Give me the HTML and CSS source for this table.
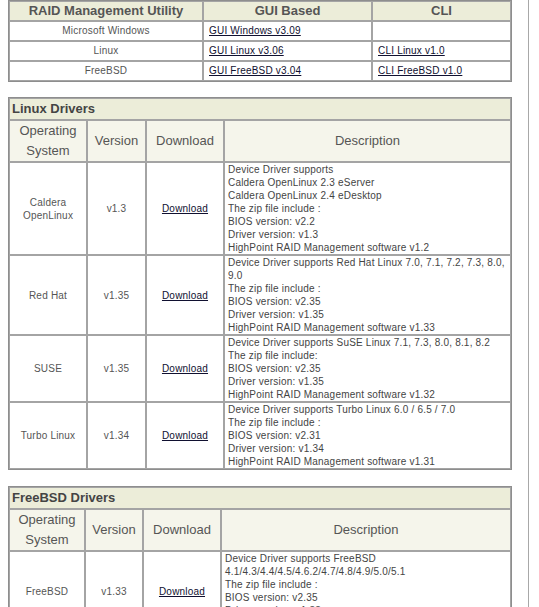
FILE: index.html
```html
<!DOCTYPE html>
<html>
<head>
<meta charset="utf-8">
<title>HighPoint RAID Drivers</title>
<link rel="stylesheet" href="styles.css">
</head>
<body>
<div class="page">
  <table class="grid util">
    <colgroup><col class="u1"><col class="u2"><col></colgroup>
    <tr class="head"><th>RAID Management Utility</th><th>GUI Based</th><th>CLI</th></tr>
    <tr><td class="os">Microsoft Windows</td><td class="lnk"><a href="#">GUI Windows v3.09</a></td><td class="lnk"></td></tr>
    <tr><td class="os">Linux</td><td class="lnk"><a href="#">GUI Linux v3.06</a></td><td class="lnk"><a href="#">CLI Linux v1.0</a></td></tr>
    <tr><td class="os">FreeBSD</td><td class="lnk"><a href="#">GUI FreeBSD v3.04</a></td><td class="lnk"><a href="#">CLI FreeBSD v1.0</a></td></tr>
  </table>

  <table class="grid drivers linux">
    <colgroup><col class="c1"><col class="c2"><col class="c3"><col></colgroup>
    <tr class="title"><th colspan="4">Linux Drivers</th></tr>
    <tr class="colhead"><th>Operating<br>System</th><th>Version</th><th>Download</th><th>Description</th></tr>
    <tr>
      <td class="mid">Caldera<br>OpenLinux</td><td class="mid">v1.3</td><td class="mid"><a href="#">Download</a></td>
      <td class="desc">Device Driver supports<br>Caldera OpenLinux 2.3 eServer<br>Caldera OpenLinux 2.4 eDesktop<br>The zip file include :<br>BIOS version: v2.2<br>Driver version: v1.3<br>HighPoint RAID Management software v1.2</td>
    </tr>
    <tr>
      <td class="mid">Red Hat</td><td class="mid">v1.35</td><td class="mid"><a href="#">Download</a></td>
      <td class="desc">Device Driver supports Red Hat Linux 7.0, 7.1, 7.2, 7.3, 8.0, 9.0<br>The zip file include :<br>BIOS version: v2.35<br>Driver version: v1.35<br>HighPoint RAID Management software v1.33</td>
    </tr>
    <tr>
      <td class="mid">SUSE</td><td class="mid">v1.35</td><td class="mid"><a href="#">Download</a></td>
      <td class="desc">Device Driver supports SuSE Linux 7.1, 7.3, 8.0, 8.1, 8.2<br>The zip file include:<br>BIOS version: v2.35<br>Driver version: v1.35<br>HighPoint RAID Management software v1.32</td>
    </tr>
    <tr>
      <td class="mid">Turbo Linux</td><td class="mid">v1.34</td><td class="mid"><a href="#">Download</a></td>
      <td class="desc">Device Driver supports Turbo Linux 6.0 / 6.5 / 7.0<br>The zip file include :<br>BIOS version: v2.31<br>Driver version: v1.34<br>HighPoint RAID Management software v1.31</td>
    </tr>
  </table>

  <table class="grid drivers bsd">
    <colgroup><col class="b1"><col class="b2"><col class="b3"><col></colgroup>
    <tr class="title"><th colspan="4">FreeBSD Drivers</th></tr>
    <tr class="colhead"><th>Operating<br>System</th><th>Version</th><th>Download</th><th>Description</th></tr>
    <tr>
      <td class="mid">FreeBSD</td><td class="mid">v1.33</td><td class="mid"><a href="#">Download</a></td>
      <td class="desc">Device Driver supports FreeBSD<br>4.1/4.3/4.4/4.5/4.6.2/4.7/4.8/4.9/5.0/5.1<br>The zip file include :<br>BIOS version: v2.35<br>Driver version: v1.33<br>HighPoint RAID Management software v1.33</td>
    </tr>
  </table>
</div>
</body>
</html>
```

FILE: styles.css
```css
html, body {
  margin: 0;
  padding: 0;
  background: #ffffff;
}

.page {
  width: 520px;
  padding: 0 0 20px 8px;
  border-right: 1px solid #a8a8a8;
  min-height: 640px;
  font-family: "Liberation Sans", Arial, sans-serif;
  color: #444;
}

.grid {
  width: 504px;
  border-collapse: separate;
  border-spacing: 0;
  border: 1px solid #8e8e8e;
  table-layout: fixed;
}

.grid th,
.grid td {
  border: 1px solid #a4a4a4;
  padding: 0 3px;
}

/* utility table */
.util .u1 { width: 194px; }
.util .u2 { width: 169px; }

.util .head th {
  background: #ecedd9;
  height: 18px;
  font-size: 13px;
  font-weight: bold;
  color: #555;
  text-align: center;
  line-height: 18px;
}

.util td {
  height: 18px;
  font-size: 10px;
  line-height: 18px;
  letter-spacing: 0.2px;
}

.util .os { text-align: center; color: #555; }
.util .lnk { text-align: left; padding-left: 5px; }

a {
  color: #101030;
  text-decoration: underline;
}

/* driver tables */
.drivers { margin-top: 15px; }
.drivers .c1 { width: 78px; }
.drivers .c2 { width: 59px; }
.drivers .c3 { width: 78px; }
.drivers .b1 { width: 76px; }
.drivers .b2 { width: 58px; }
.drivers .b3 { width: 78px; }

.drivers .title th {
  background: #ecedd9;
  height: 20px;
  line-height: 20px;
  font-size: 13px;
  font-weight: bold;
  text-align: left;
  color: #444;
  padding: 0 2px;
}

.drivers .colhead th {
  background: #f5f5eb;
  font-weight: normal;
  font-size: 13px;
  line-height: 20px;
  color: #555;
  text-align: center;
}

.drivers td {
  font-size: 10px;
  line-height: 13px;
  letter-spacing: 0.2px;
  vertical-align: middle;
}

.drivers .mid { text-align: center; color: #555; }
.drivers .desc { text-align: left; color: #444; padding: 0 2px 0 3px; }

.bsd { margin-top: 16px; }
```
